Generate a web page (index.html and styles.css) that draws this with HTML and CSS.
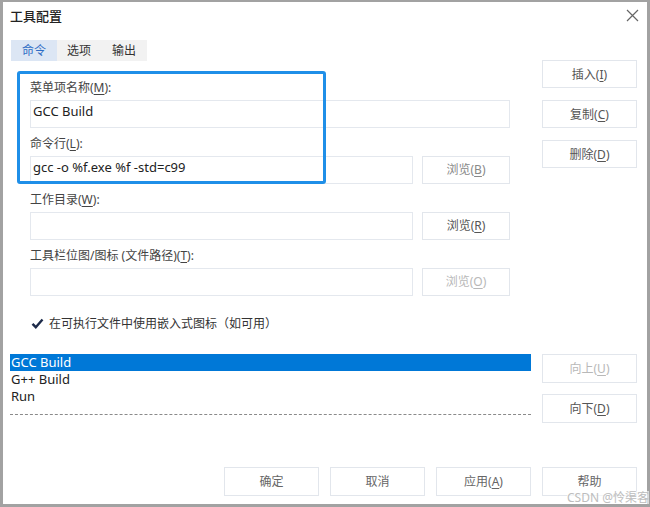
FILE: index.html
```html
<!doctype html>
<html lang="zh-CN">
<head>
	<meta charset="UTF-8">
	<title>工具配置</title>
	<link rel="stylesheet" href="styles.css">
</head>
<body>
	<div class="window">
		<div class="titlebar">
			<span class="title">工具配置</span>
			<svg class="close" width="13" height="13" viewBox="0 0 13 13"><path d="M1 1L12 12M12 1L1 12" stroke="#666" stroke-width="1.2" fill="none"/></svg>
		</div>
		<div class="main">
			<div class="left-top">
				<ul class="tabs">
					<li class="active">命令</li>
					<li>选项</li>
					<li>输出</li>
				</ul>
				<div class="form">
					<div class="field">
						<label>菜单项名称(<u>M</u>):</label>
						<div class="row"><div class="input wide">GCC Build</div></div>
					</div>
					<div class="field">
						<label>命令行(<u>L</u>):</label>
						<div class="row"><div class="input">gcc -o %f.exe %f -std=c99</div><div class="btn browse dim">浏览(<u>B</u>)</div></div>
					</div>
					<div class="field">
						<label>工作目录(<u>W</u>):</label>
						<div class="row"><div class="input"></div><div class="btn browse">浏览(<u>R</u>)</div></div>
					</div>
					<div class="field">
						<label>工具栏位图/图标 (文件路径)(<u>T</u>):</label>
						<div class="row"><div class="input"></div><div class="btn browse off">浏览(<u>O</u>)</div></div>
					</div>
					<div class="check">
						<svg width="13" height="13" viewBox="0 0 13 13"><path d="M1.5 6.8L4.8 10.2L11.5 2.5" stroke="#1d2b4a" stroke-width="2.4" fill="none"/></svg>
						<span>在可执行文件中使用嵌入式图标（如可用）</span>
					</div>
				</div>
				<div class="highlight"></div>
			</div>
			<div class="side-top">
				<div class="btn">插入(<u>I</u>)</div>
				<div class="btn">复制(<u>C</u>)</div>
				<div class="btn">删除(<u>D</u>)</div>
			</div>
			<ul class="list">
				<li class="selected">GCC Build</li>
				<li>G++ Build</li>
				<li>Run</li>
			</ul>
			<div class="side-bottom">
				<div class="btn off">向上(<u>U</u>)</div>
				<div class="btn">向下(<u>D</u>)</div>
			</div>
		</div>
		<div class="footer">
			<div class="btn plain">确定</div>
			<div class="btn plain">取消</div>
			<div class="btn plain">应用(<u>A</u>)</div>
			<div class="btn plain">帮助</div>
		</div>
		<span class="mark">CSDN @怜渠客</span>
	</div>
</body>
</html>
```

FILE: styles.css
```css
body {
	margin: 0;
	padding: 0;
	font-family: "Noto Sans", "Noto Sans CJK SC", sans-serif;
	color: #333;
}
ul {
	margin: 0;
	padding: 0;
}
li {
	list-style: none;
}
u {
	text-decoration: underline;
	text-underline-offset: 2px;
}
.window {
	width: 650px;
	height: 507px;
	box-sizing: border-box;
	border-style: solid;
	border-color: #a2a2a2;
	border-width: 2px 3px 3px 3px;
	background: #fff;
	display: flex;
	flex-direction: column;
	position: relative;/*watermark*/
}
.titlebar {
	height: 26px;
	display: flex;
	align-items: center;
	justify-content: space-between;
	padding: 0 8px 0 7px;
}
.title {
	font-size: 13px;
	font-weight: 500;
	color: #222;
}
.close {
	margin-top: 1px;
}
.main {
	display: grid;
	grid-template-columns: 521px 95px;
	column-gap: 11px;
	row-gap: 23px;
	padding: 0 10px 0 7px;
}
.left-top {
	position: relative;
}
.tabs {
	display: flex;
	margin: 12px 0 0 1px;
	width: 136px;
	background: #f2f2f2;
}
.tabs li {
	width: 46px;
	height: 21px;
	line-height: 21px;
	text-align: center;
	font-size: 12px;
	color: #333;
}
.tabs li:nth-child(2) {
	width: 44px;
}
.tabs .active {
	background: #dce6f4;
	color: #2d6cc4;
}
.form {
	padding: 19px 21px 0 20px;
}
.field {
	margin-bottom: 8px;
}
.field label {
	display: block;
	font-size: 12px;
	line-height: 16px;
	height: 16px;
	margin-bottom: 4px;
	color: #444;
}
.row {
	display: flex;
	gap: 9px;
}
.input {
	width: 383px;
	height: 28px;
	box-sizing: border-box;
	border: 1px solid #e4e8ee;
	padding: 0 2px;
	font-size: 13px;
	line-height: 21px;
	color: #222;
}
.input.wide {
	width: 480px;
}
.btn {
	height: 28px;
	box-sizing: border-box;
	border: 1px solid #e2e6ec;
	text-align: center;
	font-size: 12px;
	line-height: 26px;
	color: #555;
}
.browse {
	width: 88px;
}
.dim {
	color: #888;
}
.off {
	color: #b8b8b8;
}
.check {
	display: flex;
	align-items: center;
	gap: 5px;
	margin: 19px 0 0 1px;
	height: 16px;
	font-size: 12px;
	color: #333;
}
.highlight {
	position: absolute;
	left: 7px;
	top: 43px;
	width: 309px;
	height: 113px;
	box-sizing: border-box;
	border: 3px solid #1f8fe8;
	border-radius: 3px;
}
.side-top {
	padding-top: 32px;
	display: flex;
	flex-direction: column;
	gap: 12px;
}
.side-top .btn,
.side-bottom .btn {
	height: 29px;
	line-height: 27px;
}
.side-top .btn {
	height: 28px;
}
.list {
	align-self: start;
	padding-bottom: 9px;
	border-bottom: 1px dashed #8a8a8a;
}
.list li {
	height: 17px;
	line-height: 17px;
	font-size: 13px;
	padding-left: 1px;
	color: #222;
}
.list .selected {
	background: #0078d7;
	color: #fff;
}
.side-bottom {
	display: flex;
	flex-direction: column;
	gap: 11px;
}
.footer {
	margin-top: auto;
	display: flex;
	justify-content: flex-end;
	gap: 11px;
	padding: 0 10px 8px 0;
}
.footer .btn {
	width: 95px;
	height: 29px;
	line-height: 27px;
}
.plain {
	color: #666;
}
.mark {
	position: absolute;
	right: -2px;
	bottom: 0;
	font-size: 12px;
	line-height: 13px;
	color: #bdbdbd;
	background: rgba(255,255,255,0.6);
}
```
